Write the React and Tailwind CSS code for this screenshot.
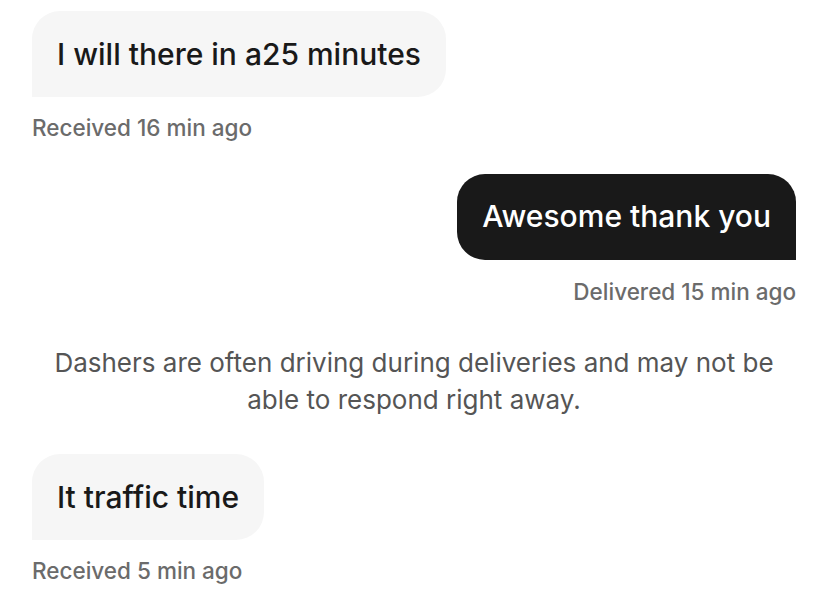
const Received = ({ text, meta }) => (
  <div className="flex flex-col items-start">
    <div className="bg-[#f6f6f6] rounded-[28px] rounded-bl-none h-[86px] px-[25px] flex items-center text-[30px] font-medium text-[#191919]">
      {text}
    </div>
    <p className="mt-[20px] text-[22.5px] font-medium text-[#6b6b6b] leading-none">{meta}</p>
  </div>
);

const Sent = ({ text, meta }) => (
  <div className="flex flex-col items-end">
    <div className="bg-[#191919] rounded-[28px] rounded-br-none h-[86px] px-[25px] flex items-center text-[30px] font-medium text-white">
      {text}
    </div>
    <p className="mt-[21px] text-[22.5px] font-medium text-[#6b6b6b] leading-none">{meta}</p>
  </div>
);

export default function App() {
  return (
    <div className="w-[828px] h-[602px] bg-white px-[32px] pt-[11px] font-['Inter',sans-serif] overflow-hidden">
      <Received text="I will there in a25 minutes" meta="Received 16 min ago" />
      <div className="mt-[34px]">
        <Sent text="Awesome thank you" meta="Delivered 15 min ago" />
      </div>
      <p className="mt-[41px] mx-auto max-w-[764px] text-center text-[26px] leading-[37px] text-[#555555]">
        Dashers are often driving during deliveries and may not be able to respond right away.
      </p>
      <div className="mt-[36px]">
        <Received text="It traffic time" meta="Received 5 min ago" />
      </div>
    </div>
  );
}
